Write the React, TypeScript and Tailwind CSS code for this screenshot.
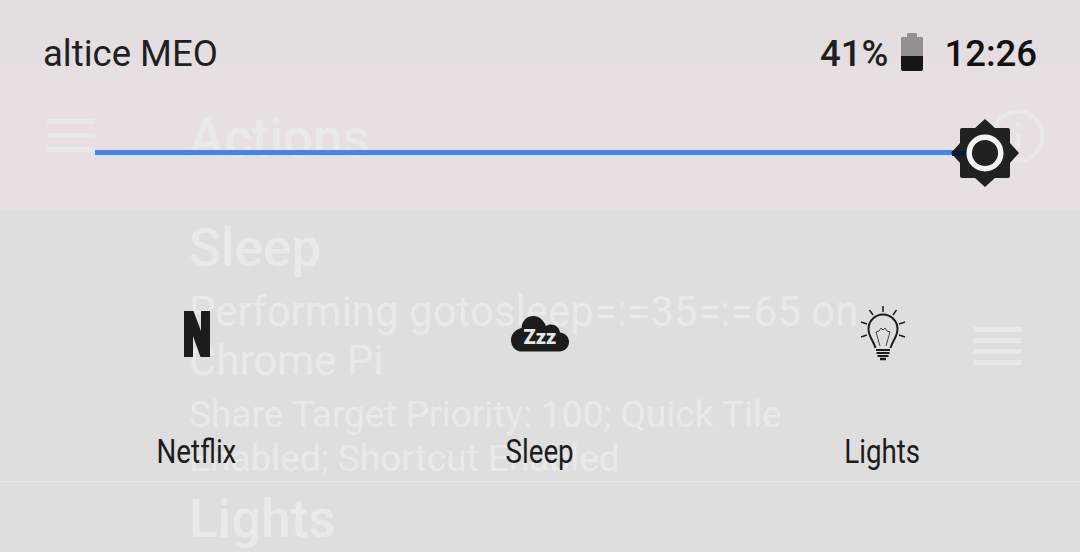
const ghost = 'text-[#e9e9e9]';

const Lines = ({ count, gap }: { count: number; gap: string }) => (
  <div className={`flex flex-col ${gap}`}>
    {Array.from({ length: count }).map((_, i) => (
      <div key={i} className="h-[5px] w-12 bg-[#e8e8e8]" />
    ))}
  </div>
);

const NetflixIcon = () => (
  <svg width="28" height="48" viewBox="0 0 28 48">
    <path d="M1 1h9.500L18 21V1h9v46h-9.500L10 26v21H1z" fill="#1c1c1c" />
  </svg>
);

const SleepIcon = () => (
  <svg width="60" height="38" viewBox="0 0 60 38">
    <path
      d="M11 36.500h38c5.500 0 10-4 10-9.500 0-5.500-4-9-9-9.500-.5-5-4.500-8-9-8-2 0-3.700.6-5 1.500C33.500 5 29 1 23.500 1 17 1 12 5.500 11.500 13 5 14.500 1 19.500 1 25c0 6.500 4.500 11.500 10 11.500z"
      fill="#1c1c1c"
    />
    <text
      x="30"
      y="29"
      textAnchor="middle"
      fontFamily="Roboto, sans-serif"
      fontWeight="900"
      fontSize="20"
      fill="#e6e6e6"
    >
      Zzz
    </text>
  </svg>
);

const BulbIcon = () => (
  <svg width="48" height="58" viewBox="0 0 48 58" fill="none" stroke="#1c1c1c">
    <path d="M24 1v6M10.500 5l3.500 5M37.500 5L34 10M2 17l6 2M46 17l-6 2M2 32l6-2M46 32l-6-2" strokeWidth="1.500" />
    <path
      d="M16.500 43c-1-4-3-7-5-11-1.500-3-2-5-2-8 0-8 6.500-14.500 14.500-14.500S38.500 16 38.500 24c0 3-.5 5-2 8-2 4-4 7-5 11"
      strokeWidth="2"
    />
    <path d="M17 27l4 14M31 27l-4 14M17 27l3-1 2-3 2 2 2-2 2 3 3 1" strokeWidth=".8" />
    <path d="M17 45h14M17.500 48h13M18.500 51h11" strokeWidth="2" />
    <path d="M21 54h6" strokeWidth="2.500" />
  </svg>
);

const tiles = [
  { label: 'Netflix', icon: <NetflixIcon /> },
  { label: 'Sleep', icon: <SleepIcon /> },
  { label: 'Lights', icon: <BulbIcon /> },
];

export default function App() {
  return (
    <div className="relative h-[552px] w-[1080px] overflow-hidden bg-[#dedede] font-['Roboto',sans-serif]">
      {/* app sitting behind the shade, washed out */}
      <div className={`flex h-[552px] flex-col ${ghost}`}>
        <header className="flex h-[210px] bg-[#e8dfe2] pl-[47px] pt-[119px]">
          <div className="flex w-[142px] flex-col gap-[9px]">
            <div className="h-[5px] w-12 bg-[#e8e8e8]" />
            <div className="h-[5px] w-12 bg-[#e8e8e8]" />
            <div className="h-[5px] w-12 bg-[#e8e8e8]" />
          </div>
          <h1 className="-mt-[9px] text-[53px] font-medium leading-[56px]">Actions</h1>
          <svg className="absolute left-[990px] top-[108px]" width="56" height="56" viewBox="0 0 56 56" fill="none" stroke="currentColor">
            <circle cx="28" cy="28" r="24.500" strokeWidth="4" />
            <path d="M28 25v15M28 14v5" strokeWidth="5" />
          </svg>
        </header>
        <div className="flex h-[272px] border-b border-[#e5e5e5] pl-[189px]">
          <div className="w-[784px] pt-[10px]">
            <h2 className="text-[53px] font-medium leading-[56px]">Sleep</h2>
            <p className="mt-[11px] w-[700px] text-[42px] leading-[49px]">Performing gotosleep=:=35=:=65 on Chrome Pi</p>
            <p className="mt-[8px] w-[640px] text-[37px] leading-[44px]">Share Target Priority: 100; Quick Tile Enabled; Shortcut Enabled</p>
          </div>
          <div className="pt-[117px]">
            <Lines count={4} gap="gap-[6px]" />
          </div>
        </div>
        <h2 className="pl-[189px] pt-[9px] text-[53px] font-medium leading-[56px]">Lights</h2>
      </div>

      {/* notification shade */}
      <div className="absolute inset-0 flex flex-col">
        <div className="flex h-[64px] shrink-0 items-center bg-[#dcdcdc]/20 px-[43px] pt-[45px] text-[36.500px] leading-none text-[#1f1f1f]">
          <span className="flex-1">altice MEO</span>
          <span className="font-medium">41%</span>
          <div className="-mt-[5px] ml-[13px] flex h-[38px] w-[22px] flex-col items-center">
            <div className="h-[4px] w-[10px] rounded-t-[1px] bg-[#939091]" />
            <div className="h-[19px] w-full rounded-t-[1px] bg-[#939091]" />
            <div className="h-[15px] w-full rounded-b-[2px] bg-[#161616]" />
          </div>
          <span className="ml-[21px] font-medium text-[#111]">12:26</span>
        </div>

        <div className="relative flex h-[146px] shrink-0 items-center pl-[95px] pt-[30px]">
          <div className="h-[5px] w-[880px] bg-[#4285f4]" />
          <svg className="absolute left-[950px] top-[54px]" width="70" height="70" viewBox="0 0 70 70">
            <path d="M35 1l10 9h13a2 2 0 0 1 2 2v13l9 10-9 10v13a2 2 0 0 1-2 2H45L35 69 25 60H12a2 2 0 0 1-2-2V45L1 35l9-10V12a2 2 0 0 1 2-2h13z" fill="#212121" />
            <rect x="2" y="33" width="16" height="5" fill="#0a1836" />
            <circle cx="35" cy="35" r="15.800" fill="#212121" stroke="#f4f4f4" strokeWidth="5.500" />
          </svg>
        </div>

        <div className="grid grid-cols-3 pl-[25px] pr-[26px]">
          {tiles.map((tile) => (
            <div key={tile.label} className="flex flex-col items-center">
              <div className="mt-[93px] flex h-[62px] items-center">{tile.icon}</div>
              <span className="mt-[69px] inline-block scale-x-[0.84] text-[33px] leading-[36px] text-[#1c1c1c]">{tile.label}</span>
            </div>
          ))}
        </div>
      </div>
    </div>
  );
}
